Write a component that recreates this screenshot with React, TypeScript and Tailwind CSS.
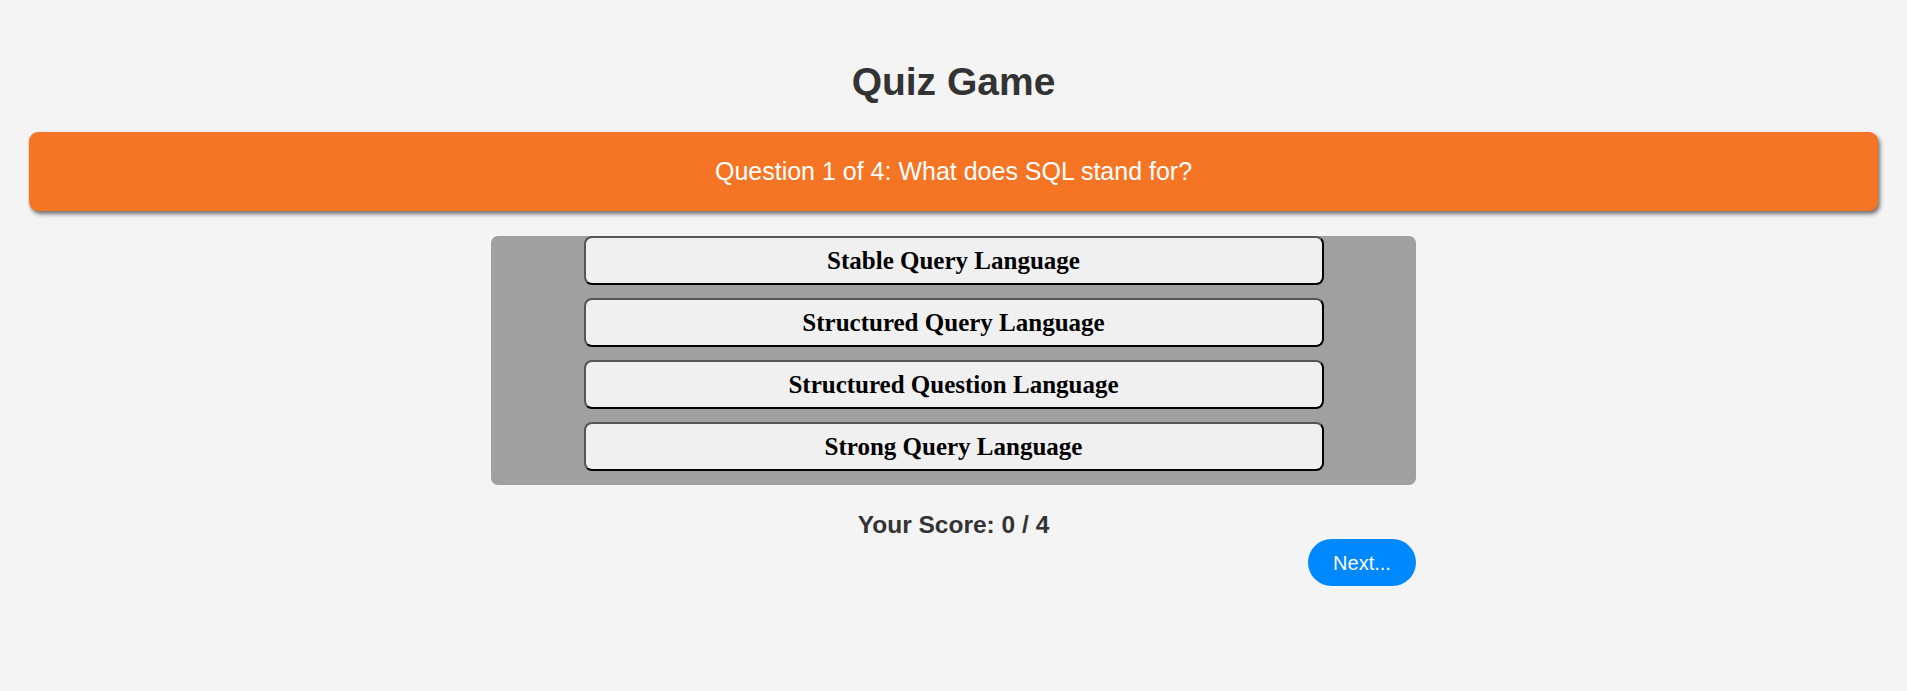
const options = [
  "Stable Query Language",
  "Structured Query Language",
  "Structured Question Language",
  "Strong Query Language",
];

const App = () => {
  return (
    <div className="min-h-[691px] bg-[#f4f4f4] pt-[59px] font-['Liberation_Sans',Arial,sans-serif]">
      <h1 className="text-center text-[39px] leading-[46px] font-bold text-[#333]">
        Quiz Game
      </h1>
      <div className="mx-[29px] mt-[27px] flex h-[79px] items-center justify-center rounded-[9px] bg-[#f57524] shadow-[2px_3px_4px_rgba(0,0,0,0.55)]">
        <span className="text-[25px] text-white">
          Question 1 of 4: What does SQL stand for?
        </span>
      </div>
      <div className="mx-auto mt-[25px] w-[925px]">
        <div className="flex flex-col items-center gap-[13px] rounded-[7px] bg-[#a0a0a0] pb-[14px]">
          {options.map((opt) => (
            <button
              key={opt}
              className="h-[49px] w-[740px] rounded-[8px] border-2 border-t-[#555] border-l-[#555] border-r-black border-b-black bg-[#f0f0f0] font-['Liberation_Serif','Times_New_Roman',serif] text-[25px] font-bold text-black"
            >
              {opt}
            </button>
          ))}
        </div>
        <p className="mt-[26px] text-center text-[24.5px] leading-[28px] font-bold text-[#333]">
          Your Score: 0 / 4
        </p>
        <div className="flex justify-end">
          <button className="h-[47px] w-[108px] rounded-full bg-[#0088ff] text-[20px] text-white">
            Next...
          </button>
        </div>
      </div>
    </div>
  );
};

export default App;
